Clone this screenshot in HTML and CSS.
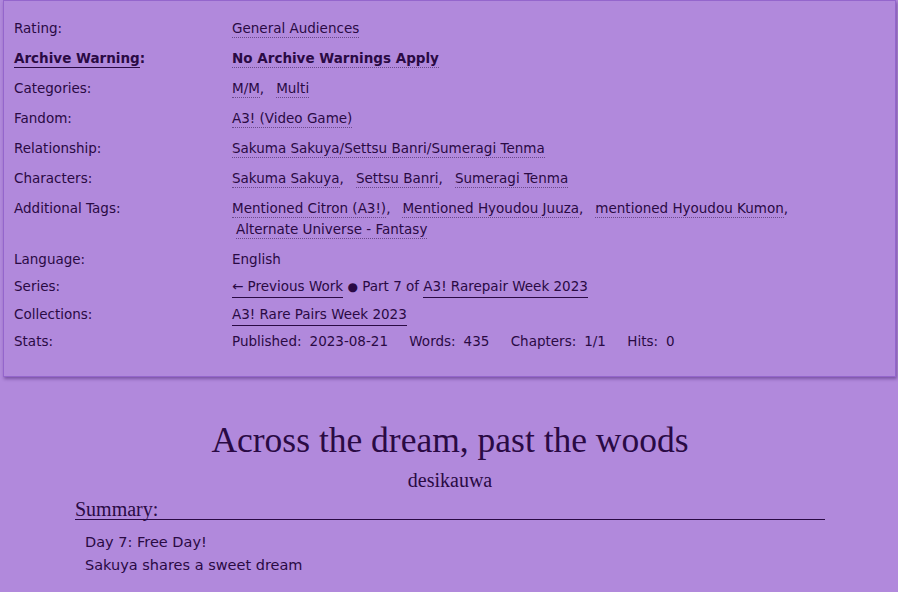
FILE: index.html
```html
<!DOCTYPE html>
<html lang="en">
<head>
  <meta charset="UTF-8">
  <title>Across the dream, past the woods</title>
  <link rel="stylesheet" href="styles.css">
</head>
<body>
  <div class="wrapper">
    <dl class="meta">
      <dt>Rating:</dt>
      <dd><ul class="tags"><li><a class="tag">General Audiences</a></li></ul></dd>

      <dt class="warning"><span class="under">Archive Warning</span>:</dt>
      <dd class="warning"><ul class="tags"><li><a class="tag">No Archive Warnings Apply</a></li></ul></dd>

      <dt>Categories:</dt>
      <dd><ul class="tags"><li><a class="tag">M/M</a>,</li><li><a class="tag">Multi</a></li></ul></dd>

      <dt>Fandom:</dt>
      <dd><ul class="tags"><li><a class="tag">A3! (Video Game)</a></li></ul></dd>

      <dt>Relationship:</dt>
      <dd><ul class="tags"><li><a class="tag">Sakuma Sakuya/Settsu Banri/Sumeragi Tenma</a></li></ul></dd>

      <dt>Characters:</dt>
      <dd><ul class="tags"><li><a class="tag">Sakuma Sakuya</a>,</li><li><a class="tag">Settsu Banri</a>,</li><li><a class="tag">Sumeragi Tenma</a></li></ul></dd>

      <dt>Additional Tags:</dt>
      <dd><ul class="tags">
        <li><a class="tag">Mentioned Citron (A3!)</a>,</li>
        <li><a class="tag">Mentioned Hyoudou Juuza</a>,</li>
        <li><a class="tag">mentioned Hyoudou Kumon</a>,</li>
        <li class="wrapped"><a class="tag">Alternate Universe - Fantasy</a></li>
      </ul></dd>

      <dt class="plain">Language:</dt>
      <dd class="plain">English</dd>

      <dt class="plain">Series:</dt>
      <dd class="plain"><a class="link">&larr; Previous Work</a> <span class="dot">&#9679;</span> Part 7 of <a class="link">A3! Rarepair Week 2023</a></dd>

      <dt class="plain">Collections:</dt>
      <dd class="plain"><a class="link">A3! Rare Pairs Week 2023</a></dd>

      <dt class="plain">Stats:</dt>
      <dd class="plain stats">
        <span>Published:</span><span class="num">2023-08-21</span>
        <span>Words:</span><span class="num">435</span>
        <span>Chapters:</span><span class="num">1/1</span>
        <span>Hits:</span><span class="num">0</span>
      </dd>
    </dl>
  </div>

  <div class="preface">
    <h2 class="title">Across the dream, past the woods</h2>
    <h3 class="byline">desikauwa</h3>
    <div class="summary">
      <h3 class="heading">Summary:</h3>
      <blockquote class="userstuff">
        <p>Day 7: Free Day!</p>
        <p>Sakuya shares a sweet dream</p>
      </blockquote>
    </div>
  </div>
</body>
</html>
```

FILE: styles.css
```css
body {
  margin: 0;
  background: #b189dc;
  color: #2a0a44;
  font-family: "DejaVu Sans", "Lucida Grande", Verdana, sans-serif;
  font-size: 13.5px;
  line-height: 21px;
}
.wrapper {
  margin: 0 2px 0 3px;
  border: 1px solid #9466cc;
  box-shadow: 1px 2px 3px rgba(60, 20, 100, 0.45);
  padding: 17px 10px 18px;
}
.meta {
  display: grid;
  grid-template-columns: 218px 1fr;
  margin: 0;
}
.meta dt, .meta dd {
  margin: 0 0 9px;
}
.meta dt.plain, .meta dd.plain {
  margin-bottom: 6px;
}
.warning {
  font-weight: bold;
}
.under {
  border-bottom: 1px solid #2a0a44;
  padding-bottom: 1px;
}
.tags {
  list-style: none;
  margin: 0;
  padding: 0;
  display: flex;
  flex-wrap: wrap;
  column-gap: 12px;
}
.tags li.wrapped {
  margin-left: 4px;
}
.tag {
  border-bottom: 1px dotted #6b4a8c;
  padding-bottom: 1px;
}
.link {
  border-bottom: 1px solid #2a0a44;
  padding-bottom: 3px;
}
.dot {
  font-size: 12px;
}
.stats span {
  margin-right: 8px;
}
.stats .num {
  margin-right: 17px;
}
.preface {
  padding: 43px 73px 0 75px;
}
.title {
  font-family: "Liberation Serif", Georgia, serif;
  font-weight: normal;
  font-size: 35.5px;
  line-height: 40px;
  text-align: center;
  margin: 0;
}
.byline {
  font-family: "Liberation Serif", Georgia, serif;
  font-weight: normal;
  font-size: 20px;
  line-height: 24px;
  text-align: center;
  margin: 8px 0 0;
}
.summary .heading {
  font-family: "Liberation Serif", Georgia, serif;
  font-weight: normal;
  font-size: 20px;
  line-height: 19px;
  margin: 8px 0 0;
  border-bottom: 1px solid #2a0a44;
}
.userstuff {
  margin: 11px 0 0 10px;
  font-size: 14.5px;
  line-height: 23px;
}
.userstuff p {
  margin: 0;
}
```
